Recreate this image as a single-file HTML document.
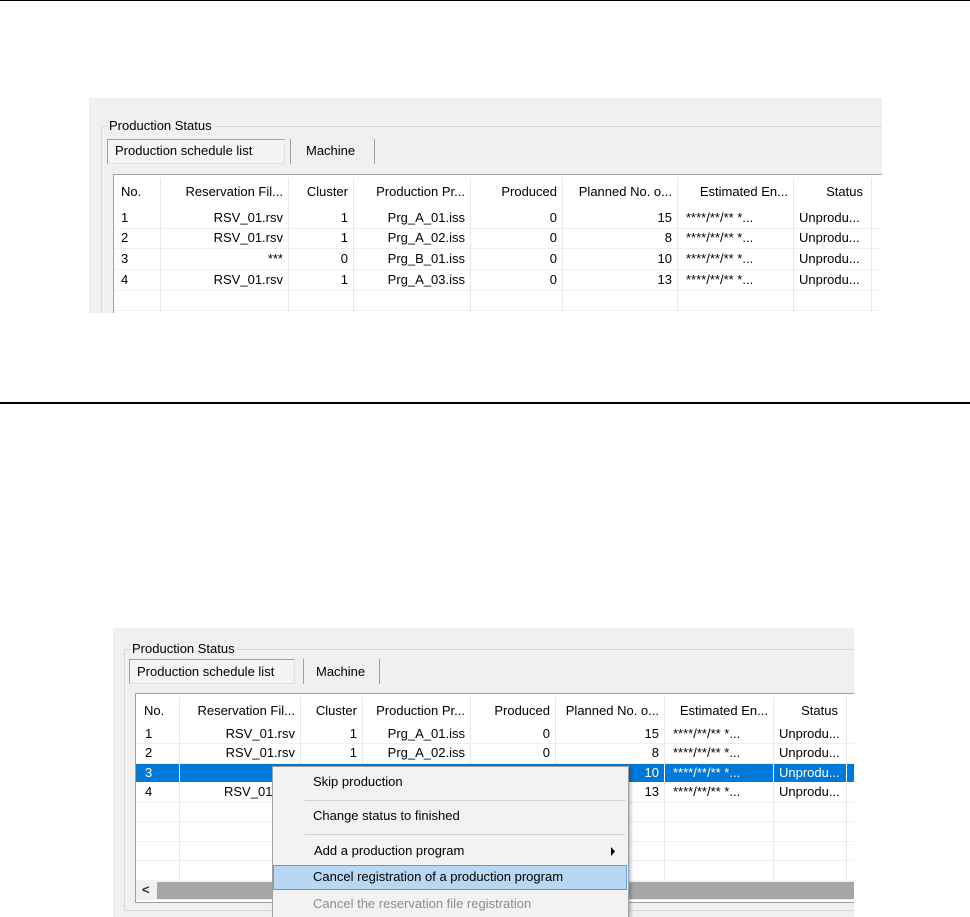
<!DOCTYPE html>
<html><head><meta charset="utf-8"><style>
*{margin:0;padding:0;box-sizing:border-box}
body{width:970px;height:917px;background:#fff;position:relative;overflow:hidden;font-family:"Liberation Sans","Noto Sans CJK JP",sans-serif;font-size:13px;color:#000}
.a{position:absolute}
.t{position:absolute;white-space:nowrap;line-height:16px}
.r{text-align:right}
</style></head><body>
<div class="a" style="left:0;top:0;width:970px;height:1px;background:#000"></div>
<div class="a" style="left:0;top:402px;width:970px;height:2px;background:#000"></div>

<!-- PANEL 1 -->
<div class="a" style="left:89px;top:98px;width:793px;height:215px;background:#f0f0f0"></div>
<div class="a" style="left:101px;top:126px;width:781px;height:187px;border-left:1px solid #d8d8d8;border-top:1px solid #d8d8d8"></div>
<div class="t" style="left:107px;top:118px;background:#f0f0f0;padding:0 2px">Production Status</div>
<div class="a" style="left:107px;top:139px;width:178px;height:25px;border:1px solid #a0a0a0;border-right-color:#e0e0e0;border-bottom-color:#e0e0e0;background:#f4f4f4"></div>
<div class="t" style="left:115px;top:143px">Production schedule list</div>
<div class="a" style="left:290px;top:139px;width:1px;height:25px;background:#a0a0a0"></div>
<div class="t" style="left:306px;top:143px">Machine</div>
<div class="a" style="left:374px;top:139px;width:1px;height:25px;background:#a0a0a0"></div>
<div class="a" style="left:113px;top:174px;width:769px;height:139px;background:#fff;border-left:1px solid #a0a0a0;border-top:1px solid #a0a0a0"></div>
<!-- col lines header -->
<div class="a" style="left:160px;top:178px;width:1px;height:135px;background:#e8e8e8"></div>
<div class="a" style="left:288px;top:178px;width:1px;height:135px;background:#e8e8e8"></div>
<div class="a" style="left:353px;top:178px;width:1px;height:135px;background:#e8e8e8"></div>
<div class="a" style="left:470px;top:178px;width:1px;height:135px;background:#e8e8e8"></div>
<div class="a" style="left:562px;top:178px;width:1px;height:135px;background:#e8e8e8"></div>
<div class="a" style="left:677px;top:178px;width:1px;height:135px;background:#e8e8e8"></div>
<div class="a" style="left:793px;top:178px;width:1px;height:135px;background:#e8e8e8"></div>
<div class="a" style="left:871px;top:178px;width:1px;height:135px;background:#e8e8e8"></div>
<div class="a" style="left:114px;top:228px;width:768px;height:1px;background:#f0f0f0"></div>
<div class="a" style="left:114px;top:248px;width:768px;height:1px;background:#f0f0f0"></div>
<div class="a" style="left:114px;top:269px;width:768px;height:1px;background:#f0f0f0"></div>
<div class="a" style="left:114px;top:290px;width:768px;height:1px;background:#f0f0f0"></div>
<div class="a" style="left:114px;top:310px;width:768px;height:1px;background:#f0f0f0"></div>
<!-- header -->
<div class="t" style="left:121px;top:184px">No.</div>
<div class="t r" style="left:160px;top:184px;width:123px">Reservation Fil...</div>
<div class="t r" style="left:288px;top:184px;width:60px">Cluster</div>
<div class="t r" style="left:353px;top:184px;width:112px">Production Pr...</div>
<div class="t r" style="left:470px;top:184px;width:87px">Produced</div>
<div class="t r" style="left:562px;top:184px;width:110px">Planned No. o...</div>
<div class="t r" style="left:677px;top:184px;width:111px">Estimated En...</div>
<div class="t r" style="left:793px;top:184px;width:70px">Status</div>
<!-- rows -->
<div class="a" style="left:0;top:210px">
<div class="t" style="left:121px;top:0">1</div><div class="t r" style="left:160px;top:0;width:123px">RSV_01.rsv</div><div class="t r" style="left:288px;top:0;width:60px">1</div><div class="t r" style="left:353px;top:0;width:112px">Prg_A_01.iss</div><div class="t r" style="left:470px;top:0;width:87px">0</div><div class="t r" style="left:562px;top:0;width:110px">15</div><div class="t" style="left:686px;top:0">****/**/** *...</div><div class="t" style="left:799px;top:0">Unprodu...</div>
</div>
<div class="a" style="left:0;top:230px">
<div class="t" style="left:121px;top:0">2</div><div class="t r" style="left:160px;top:0;width:123px">RSV_01.rsv</div><div class="t r" style="left:288px;top:0;width:60px">1</div><div class="t r" style="left:353px;top:0;width:112px">Prg_A_02.iss</div><div class="t r" style="left:470px;top:0;width:87px">0</div><div class="t r" style="left:562px;top:0;width:110px">8</div><div class="t" style="left:686px;top:0">****/**/** *...</div><div class="t" style="left:799px;top:0">Unprodu...</div>
</div>
<div class="a" style="left:0;top:251px">
<div class="t" style="left:121px;top:0">3</div><div class="t r" style="left:160px;top:0;width:123px">***</div><div class="t r" style="left:288px;top:0;width:60px">0</div><div class="t r" style="left:353px;top:0;width:112px">Prg_B_01.iss</div><div class="t r" style="left:470px;top:0;width:87px">0</div><div class="t r" style="left:562px;top:0;width:110px">10</div><div class="t" style="left:686px;top:0">****/**/** *...</div><div class="t" style="left:799px;top:0">Unprodu...</div>
</div>
<div class="a" style="left:0;top:272px">
<div class="t" style="left:121px;top:0">4</div><div class="t r" style="left:160px;top:0;width:123px">RSV_01.rsv</div><div class="t r" style="left:288px;top:0;width:60px">1</div><div class="t r" style="left:353px;top:0;width:112px">Prg_A_03.iss</div><div class="t r" style="left:470px;top:0;width:87px">0</div><div class="t r" style="left:562px;top:0;width:110px">13</div><div class="t" style="left:686px;top:0">****/**/** *...</div><div class="t" style="left:799px;top:0">Unprodu...</div>
</div>

<!-- PANEL 2 -->
<div class="a" style="left:113px;top:628px;width:741px;height:289px;background:#f0f0f0"></div>
<div class="a" style="left:124px;top:649px;width:730px;height:262px;border-left:1px solid #d8d8d8;border-top:1px solid #d8d8d8;border-bottom:1px solid #d8d8d8"></div>
<div class="t" style="left:130px;top:641px;background:#f0f0f0;padding:0 2px">Production Status</div>
<div class="a" style="left:129px;top:659px;width:166px;height:25px;border:1px solid #a0a0a0;border-right-color:#e0e0e0;border-bottom-color:#e0e0e0;background:#f4f4f4"></div>
<div class="t" style="left:137px;top:664px">Production schedule list</div>
<div class="a" style="left:303px;top:659px;width:1px;height:25px;background:#a0a0a0"></div>
<div class="t" style="left:316px;top:664px">Machine</div>
<div class="a" style="left:379px;top:659px;width:1px;height:25px;background:#a0a0a0"></div>
<div class="a" style="left:135px;top:693px;width:719px;height:210px;background:#fff;border-left:1px solid #a0a0a0;border-top:1px solid #a0a0a0;border-bottom:1px solid #a0a0a0"></div>
<div class="a" style="left:179px;top:697px;width:1px;height:183px;background:#e8e8e8"></div>
<div class="a" style="left:300px;top:697px;width:1px;height:183px;background:#e8e8e8"></div>
<div class="a" style="left:362px;top:697px;width:1px;height:183px;background:#e8e8e8"></div>
<div class="a" style="left:470px;top:697px;width:1px;height:183px;background:#e8e8e8"></div>
<div class="a" style="left:555px;top:697px;width:1px;height:183px;background:#e8e8e8"></div>
<div class="a" style="left:664px;top:697px;width:1px;height:183px;background:#e8e8e8"></div>
<div class="a" style="left:773px;top:697px;width:1px;height:183px;background:#e8e8e8"></div>
<div class="a" style="left:846px;top:697px;width:1px;height:183px;background:#e8e8e8"></div>
<div class="a" style="left:136px;top:743px;width:718px;height:1px;background:#f0f0f0"></div>
<div class="a" style="left:136px;top:763px;width:718px;height:1px;background:#f0f0f0"></div>
<div class="a" style="left:136px;top:802px;width:718px;height:1px;background:#f0f0f0"></div>
<div class="a" style="left:136px;top:821px;width:718px;height:1px;background:#f0f0f0"></div>
<div class="a" style="left:136px;top:841px;width:718px;height:1px;background:#f0f0f0"></div>
<div class="a" style="left:136px;top:860px;width:718px;height:1px;background:#f0f0f0"></div>
<!-- selected row -->
<div class="a" style="left:136px;top:764px;width:718px;height:18px;background:#0078d7"></div>
<div class="a" style="left:179px;top:764px;width:1px;height:18px;background:#fff"></div>
<div class="a" style="left:664px;top:764px;width:1px;height:18px;background:#fff"></div>
<div class="a" style="left:773px;top:764px;width:1px;height:18px;background:#fff"></div>
<div class="a" style="left:846px;top:764px;width:1px;height:18px;background:#fff"></div>
<!-- header -->
<div class="t" style="left:144px;top:703px">No.</div>
<div class="t r" style="left:179px;top:703px;width:116px">Reservation Fil...</div>
<div class="t r" style="left:300px;top:703px;width:57px">Cluster</div>
<div class="t r" style="left:362px;top:703px;width:103px">Production Pr...</div>
<div class="t r" style="left:470px;top:703px;width:80px">Produced</div>
<div class="t r" style="left:555px;top:703px;width:104px">Planned No. o...</div>
<div class="t r" style="left:664px;top:703px;width:104px">Estimated En...</div>
<div class="t r" style="left:773px;top:703px;width:65px">Status</div>
<div class="a" style="left:0;top:726px">
<div class="t" style="left:145px;top:0">1</div><div class="t r" style="left:179px;top:0;width:116px">RSV_01.rsv</div><div class="t r" style="left:300px;top:0;width:57px">1</div><div class="t r" style="left:362px;top:0;width:103px">Prg_A_01.iss</div><div class="t r" style="left:470px;top:0;width:80px">0</div><div class="t r" style="left:555px;top:0;width:104px">15</div><div class="t" style="left:673px;top:0">****/**/** *...</div><div class="t" style="left:779px;top:0">Unprodu...</div>
</div>
<div class="a" style="left:0;top:745px">
<div class="t" style="left:145px;top:0">2</div><div class="t r" style="left:179px;top:0;width:116px">RSV_01.rsv</div><div class="t r" style="left:300px;top:0;width:57px">1</div><div class="t r" style="left:362px;top:0;width:103px">Prg_A_02.iss</div><div class="t r" style="left:470px;top:0;width:80px">0</div><div class="t r" style="left:555px;top:0;width:104px">8</div><div class="t" style="left:673px;top:0">****/**/** *...</div><div class="t" style="left:779px;top:0">Unprodu...</div>
</div>
<div class="a" style="left:0;top:765px;color:#fff">
<div class="t" style="left:145px;top:0">3</div><div class="t r" style="left:555px;top:0;width:104px">10</div><div class="t" style="left:673px;top:0">****/**/** *...</div><div class="t" style="left:779px;top:0">Unprodu...</div>
</div>
<div class="a" style="left:0;top:784px">
<div class="t" style="left:145px;top:0">4</div><div class="t" style="left:224px;top:0">RSV_01</div><div class="t r" style="left:555px;top:0;width:104px">13</div><div class="t" style="left:673px;top:0">****/**/** *...</div><div class="t" style="left:779px;top:0">Unprodu...</div>
</div>
<!-- scrollbar -->
<div class="a" style="left:136px;top:880px;width:718px;height:20px;background:#f0f0f0"></div>
<div class="a" style="left:157px;top:882px;width:697px;height:17px;background:#a6a6a6"></div>
<div class="t" style="left:142px;top:882px;font-weight:bold;color:#333">&lt;</div>

<!-- context menu -->
<div class="a" style="left:272px;top:766px;width:357px;height:151px;background:#f2f2f2;border:1px solid #a0a0a0;border-bottom:none;box-shadow:2px 2px 3px rgba(0,0,0,.25)"></div>
<div class="t" style="left:313px;top:774px">Skip production</div>
<div class="a" style="left:305px;top:800px;width:320px;height:1px;background:#d0d0d0"></div>
<div class="t" style="left:313px;top:808px">Change status to finished</div>
<div class="a" style="left:305px;top:834px;width:320px;height:1px;background:#d0d0d0"></div>
<div class="t" style="left:314px;top:843px">Add a production program</div>
<svg class="a" style="left:610px;top:847px" width="6" height="9"><path d="M1 0L5 4.5L1 9Z" fill="#000"/></svg>
<div class="a" style="left:273px;top:865px;width:354px;height:25px;background:#b7d7f3;border:1px solid #5b9fe3"></div>
<div class="t" style="left:313px;top:869px">Cancel registration of a production program</div>
<div class="t" style="left:313px;top:896px;color:#8d8d8d">Cancel the reservation file registration</div>
</body></html>
